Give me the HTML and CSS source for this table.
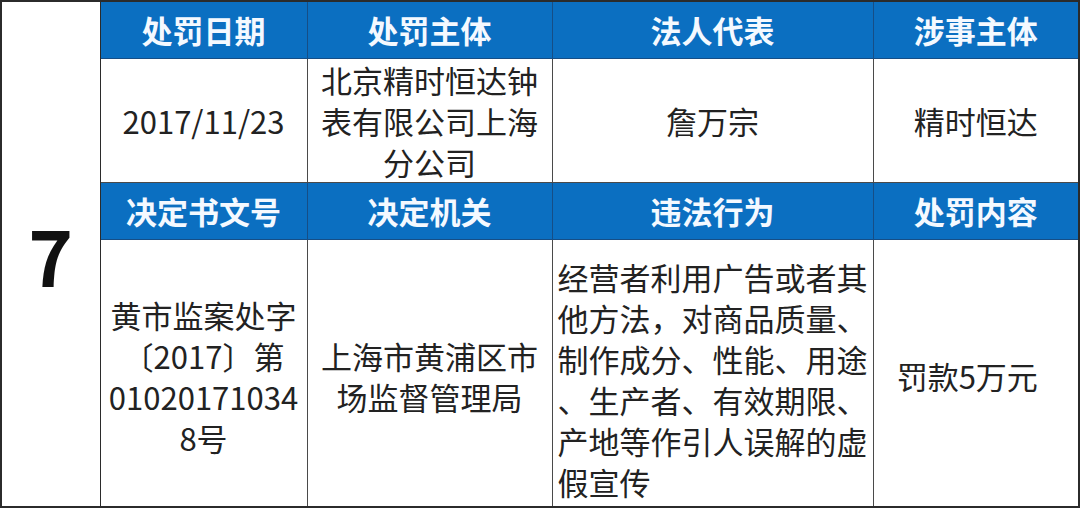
FILE: index.html
```html
<!DOCTYPE html>
<html lang="zh-CN">
<head>
<meta charset="utf-8">
<link rel="stylesheet" href="styles.css">
</head>
<body>
<table class="sheet">
  <colgroup>
    <col class="c0"><col class="c1"><col class="c2"><col class="c3"><col class="c4">
  </colgroup>
  <tr class="head">
    <td class="num" rowspan="4">7</td>
    <th>处罚日期</th><th>处罚主体</th><th>法人代表</th><th>涉事主体</th>
  </tr>
  <tr class="data1">
    <td>2017/11/23</td>
    <td>北京精时恒达钟表有限公司上海分公司</td>
    <td>詹万宗</td>
    <td>精时恒达</td>
  </tr>
  <tr class="head">
    <th>决定书文号</th><th>决定机关</th><th>违法行为</th><th>处罚内容</th>
  </tr>
  <tr class="data2">
    <td>黄市监案处字<br>〔2017〕第<br>01020171034<br>8号</td>
    <td>上海市黄浦区市<br>场监督管理局</td>
    <td class="left">经营者利用广告或者其<br>他方法，对商品质量、<br>制作成分、性能、用途<br>、生产者、有效期限、<br>产地等作引人误解的虚<br>假宣传</td>
    <td class="fine">罚款5万元</td>
  </tr>
</table>
</body>
</html>
```
FILE: styles.css
```css
html, body {
  margin: 0;
  padding: 0;
  background: #ffffff;
}
.sheet {
  border-collapse: collapse;
  table-layout: fixed;
  width: 1078px;
  font-family: "Noto Sans CJK SC", "Noto Sans", sans-serif;
  border: 2px solid #2b2b2b;
}
.c0 { width: 99px; }
.c1 { width: 207px; }
.c2 { width: 245px; }
.c3 { width: 321px; }
.c4 { width: 206px; }
.sheet td, .sheet th {
  box-sizing: border-box;
  border: 1px solid #4a4a4a;
  text-align: center;
  vertical-align: middle;
  padding: 0 5px;
  white-space: normal;
}
.head th {
  background: #0b6fc1;
  color: #f4f9ff;
  font-weight: 700;
  font-size: 31px;
  line-height: 40px;
  height: 57px;
  border-color: #164e86;
}
.data1 td, .data2 td {
  color: #222222;
  font-size: 31px;
  line-height: 41px;
  font-weight: 400;
}
.data1 td { height: 122px; }
.data2 td { height: 268px; padding-top: 6px; }
.data2 td.left {
  text-align: left;
  white-space: nowrap;
  padding-left: 5px;
  padding-top: 12px;
  padding-bottom: 0;
}
.data2 td.fine { padding-right: 22px; }
.sheet td.num {
  font-size: 76px;
  font-weight: 700;
  color: #111111;
  padding: 0;
  border-color: #2b2b2b;
}
```
